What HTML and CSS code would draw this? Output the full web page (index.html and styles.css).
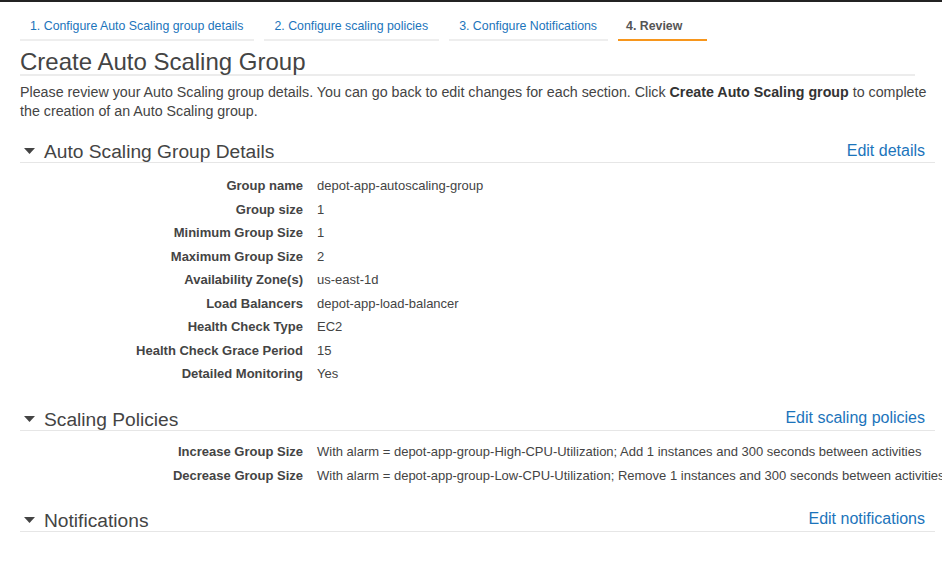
FILE: index.html
```html
<!DOCTYPE html>
<html>
<head>
<meta charset="utf-8">
<link rel="stylesheet" href="styles.css">
</head>
<body>
<div class="topbar"></div>
<div class="page">
  <nav class="tabs">
    <a class="tab">1. Configure Auto Scaling group details</a>
    <a class="tab">2. Configure scaling policies</a>
    <a class="tab">3. Configure Notifications</a>
    <a class="tab active">4. Review</a>
  </nav>
  <h1 class="title">Create Auto Scaling Group</h1>
  <p class="intro">Please review your Auto Scaling group details. You can go back to edit changes for each section. Click <b>Create Auto Scaling group</b> to complete the creation of an Auto Scaling group.</p>

  <section class="section">
    <div class="sec-head">
      <h2 class="sec-title"><svg class="caret" width="11" height="6" viewBox="0 0 11 6"><polygon points="0,0 11,0 5.5,6" fill="#444"/></svg>Auto Scaling Group Details</h2>
      <a class="edit">Edit details</a>
    </div>
    <div class="rows">
      <div class="lbl">Group name</div><div class="val">depot-app-autoscaling-group</div>
      <div class="lbl">Group size</div><div class="val">1</div>
      <div class="lbl">Minimum Group Size</div><div class="val">1</div>
      <div class="lbl">Maximum Group Size</div><div class="val">2</div>
      <div class="lbl">Availability Zone(s)</div><div class="val">us-east-1d</div>
      <div class="lbl">Load Balancers</div><div class="val">depot-app-load-balancer</div>
      <div class="lbl">Health Check Type</div><div class="val">EC2</div>
      <div class="lbl">Health Check Grace Period</div><div class="val">15</div>
      <div class="lbl">Detailed Monitoring</div><div class="val">Yes</div>
    </div>
  </section>

  <section class="section">
    <div class="sec-head">
      <h2 class="sec-title"><svg class="caret" width="11" height="6" viewBox="0 0 11 6"><polygon points="0,0 11,0 5.5,6" fill="#444"/></svg>Scaling Policies</h2>
      <a class="edit">Edit scaling policies</a>
    </div>
    <div class="rows tight">
      <div class="lbl">Increase Group Size</div><div class="val">With alarm = depot-app-group-High-CPU-Utilization; Add 1 instances and 300 seconds between activities</div>
      <div class="lbl">Decrease Group Size</div><div class="val">With alarm = depot-app-group-Low-CPU-Utilization; Remove 1 instances and 300 seconds between activities</div>
    </div>
  </section>

  <section class="section last">
    <div class="sec-head">
      <h2 class="sec-title"><svg class="caret" width="11" height="6" viewBox="0 0 11 6"><polygon points="0,0 11,0 5.5,6" fill="#444"/></svg>Notifications</h2>
      <a class="edit">Edit notifications</a>
    </div>
  </section>
</div>
</body>
</html>
```

FILE: styles.css
```css
html, body {
  margin: 0;
  padding: 0;
  background: #fff;
  overflow: hidden;
}
body {
  font-family: "Liberation Sans", Arial, sans-serif;
  color: #444;
  width: 942px;
  height: 567px;
}
.topbar {
  height: 2px;
  background: #232323;
}
.page {
  padding: 0 7px 0 20px;
}
.tabs {
  display: flex;
  gap: 10px;
  margin-top: 12px;
}
.tab {
  display: block;
  font-size: 12.35px;
  line-height: 14px;
  padding: 5px 11px 6px 10px;
  color: #1b74bb;
  border-bottom: 2px solid #eeeeee;
}
.tab.active {
  color: #555;
  font-weight: bold;
  padding: 5px 25px 6px 8px;
  border-bottom-color: #f7961c;
}
.title {
  margin: 9px 20px 0 0;
  font-size: 24px;
  line-height: 24px;
  font-weight: normal;
  color: #444;
  border-bottom: 2px solid #ececec;
}
.intro {
  margin: 7px 0 0 0;
  font-size: 14.25px;
  line-height: 19px;
  color: #444;
}
.intro b {
  font-weight: bold;
  color: #333;
}
.section {
  margin-top: 19px;
}
.section + .section {
  margin-top: 22px;
}
.section.last {
  margin-top: 21.5px;
}
.sec-head {
  display: flex;
  justify-content: space-between;
  align-items: flex-start;
  height: 22px;
  border-bottom: 1px solid #e6e6e6;
  padding-right: 10px;
}
.sec-title {
  margin: 0;
  padding-top: 2px;
  font-size: 19.2px;
  line-height: 20px;
  font-weight: normal;
  color: #444;
  display: flex;
  align-items: center;
}
.caret {
  margin: 0 9px 0 4px;
  position: relative;
  top: -1px;
}
.edit {
  font-size: 16px;
  line-height: 20px;
  color: #1b74bb;
  position: relative;
  top: 0.5px;
}
.rows {
  display: grid;
  grid-template-columns: 283px auto;
  grid-auto-rows: 23.5px;
  column-gap: 14px;
  margin-top: 11px;
  font-size: 13px;
  white-space: nowrap;
}
.rows.tight {
  margin-top: 9.5px;
}
.lbl, .val {
  line-height: 23.5px;
}
.lbl {
  text-align: right;
  font-weight: bold;
  color: #444;
}
.val {
  color: #444;
}
```
